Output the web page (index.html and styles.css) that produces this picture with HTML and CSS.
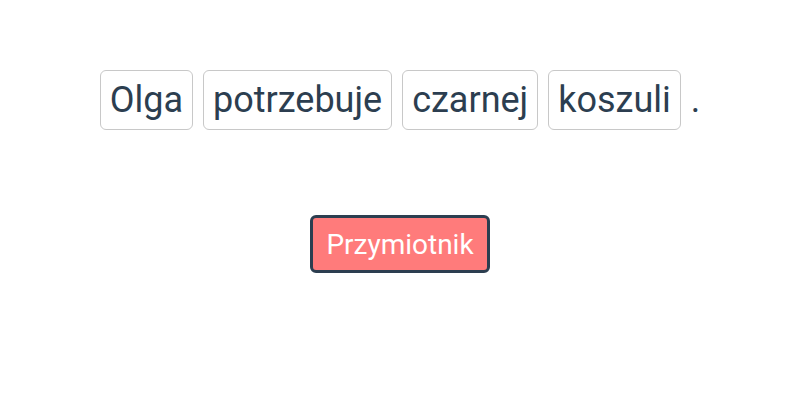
FILE: index.html
```html
<!DOCTYPE html>
<html lang="pl">
<head>
    <meta charset="UTF-8">
    <meta name="viewport" content="width=device-width, initial-scale=1.0">
    <title>Części mowy</title>
    <link rel="stylesheet" href="styles.css">
</head>
<body>
    <div class="exercise">
        <div class="sentence">
            <span class="word">Olga</span>
            <span class="word">potrzebuje</span>
            <span class="word">czarnej</span>
            <span class="word">koszuli</span>
            <span class="punct">.</span>
        </div>
        <div class="answers">
            <button class="tag">Przymiotnik</button>
        </div>
    </div>
</body>
</html>
```

FILE: styles.css
```css
body {
    margin: 0;
    background-color: #ffffff;
    font-family: Roboto, "Noto Sans", sans-serif;
    color: #2c3e50;
}

.exercise {
    display: flex;
    flex-direction: column;
    align-items: center;
    padding-top: 70px;
}

.sentence {
    display: flex;
    align-items: center;
    gap: 10px;
    font-size: 36px;
}

.word {
    padding: 8px 9px;
    border: 1px solid #c8c8c8;
    border-radius: 6px;
    background-color: #ffffff;
}

.punct {
    padding: 8px 0;
}

.answers {
    margin-top: 85px;
}

.tag {
    font-family: Roboto, "Noto Sans", sans-serif;
    font-size: 28px;
    color: #ffffff;
    background-color: #ff7b7b;
    border: 3px solid #2c3e50;
    border-radius: 6px;
    padding: 10px 13px 9px;
    cursor: pointer;
}
```
